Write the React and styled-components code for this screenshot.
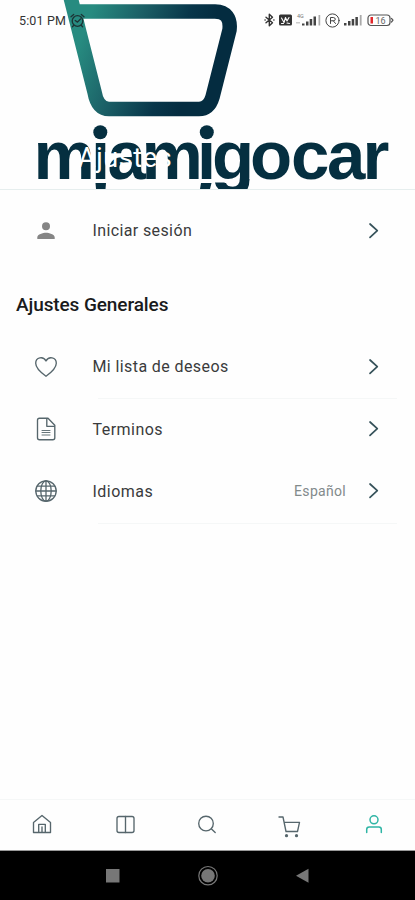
import React from "react";
import styled, { createGlobalStyle } from "styled-components";

const GlobalStyle = createGlobalStyle`
  * { box-sizing: border-box; }
  body { margin: 0; background: #fefefe; font-family: Roboto, sans-serif; }
`;

const Screen = styled.div`
  display: flex;
  flex-direction: column;
  width: 415px;
  height: 900px;
  overflow: hidden;
  background: #fefefe;
`;

const Header = styled.header`
  position: relative;
  display: flex;
  flex-direction: column;
  justify-content: space-between;
  flex: none;
  height: 190px;
  overflow: hidden;
  border-bottom: 1px solid #e6eeee;
`;

const Brand = styled.svg`
  position: absolute;
  inset: 0;
  font-family: "Liberation Sans", sans-serif;
  font-weight: 700;
`;

const StatusBar = styled.div`
  position: relative;
  display: flex;
  align-items: center;
  justify-content: space-between;
  height: 40px;
  padding: 0 21.5px 0 19px;
`;

const StatusGroup = styled.div`
  display: flex;
  align-items: center;
  gap: ${(p) => p.$gap}px;
`;

const Clock = styled.span`
  font-size: 12.5px;
  letter-spacing: 0.15px;
  color: #333;
`;

const Title = styled.h1`
  position: relative;
  margin: 0;
  padding: 0 0 14px 78px;
  font-size: 27px;
  line-height: 34px;
  letter-spacing: 0.6px;
  font-weight: 400;
  color: #fff;
`;

const Content = styled.main`
  display: flex;
  flex-direction: column;
  flex: 1;
`;

const Row = styled.div`
  display: flex;
  align-items: center;
  height: ${(p) => p.$height}px;
  padding: 0 30px 0 34px;
`;

const RowIcon = styled.span`
  display: flex;
  width: 58.5px;
`;

const Label = styled.span`
  flex: 1;
  font-size: 16px;
  letter-spacing: ${(p) => p.$spacing || 0.25}px;
  color: #3a3b3c;
`;

const Value = styled.span`
  margin-right: 15px;
  font-size: 14px;
  letter-spacing: 0.3px;
  color: #828a8b;
`;

const Divider = styled.div`
  height: 1px;
  margin: 0 18px 0 98px;
  background: #f5f7f7;
`;

const SectionTitle = styled.h2`
  margin: 0;
  padding: 22px 16px 18px;
  font-size: 19px;
  line-height: 24px;
  letter-spacing: -0.1px;
  font-weight: 500;
  color: #1a1b1c;
`;

const TabBar = styled.nav`
  display: flex;
  justify-content: space-between;
  flex: none;
  height: 52px;
  padding: 13px 29px 0 30px;
  border-top: 1px solid #f5f7f7;
  border-bottom: 1px solid #999;
`;

const SystemBar = styled.footer`
  display: flex;
  align-items: center;
  flex: none;
  gap: 73px;
  height: 49px;
  padding-left: 102px;
  background: #000;
`;

const LineIcon = styled.svg`
  display: block;
  flex: none;
  fill: none;
  stroke: ${(p) => p.$color || "#56666c"};
  stroke-width: ${(p) => p.$weight || 1.35};
  stroke-linecap: round;
  stroke-linejoin: round;
`;

function Icon({ w = 24, h = 24, color, weight, children }) {
  return (
    <LineIcon width={w} height={h} viewBox={`0 0 ${w} ${h}`} $color={color} $weight={weight}>
      {children}
    </LineIcon>
  );
}

const Chevron = () => (
  <Icon color="#36525a" weight={1.7}>
    <path d="M9 5 16.300 11.700 9 18.400" />
  </Icon>
);

const Signal = () => (
  <Icon w={19} h={12} color="none">
    <g fill="#444">
      <rect x="0" y="9" width="2.5" height="2.5" />
      <rect x="4" y="7" width="2.5" height="4.5" />
      <rect x="7.7" y="5" width="2.5" height="6.5" />
      <rect x="11.4" y="3" width="2.5" height="8.5" />
      <rect x="15.8" y="1" width="1.8" height="10.5" fill="#aaa" />
    </g>
  </Icon>
);

function BrandMark() {
  return (
    <Brand width="415" height="189" viewBox="0 0 415 189">
      <defs>
        <linearGradient id="cart" gradientUnits="userSpaceOnUse" x1="80" y1="42" x2="190" y2="84">
          <stop offset="0" stopColor="#278b80" />
          <stop offset="0.4" stopColor="#1b5f66" />
          <stop offset="0.78" stopColor="#08364a" />
          <stop offset="1" stopColor="#042c40" />
        </linearGradient>
      </defs>
      <g fill="none" stroke="url(#cart)" strokeWidth="14.5">
        <path d="M69.2-8 94.5 92Q97.5 109 109 109H199Q209 109 212.5 97L229.5 30Q231.5 12 215 11.5H72" />
      </g>
      <text
        x="33.5 91 107.5 141.5 197 212 250 291 327 362.5"
        y="178.5"
        fontSize="69"
        fill="#052f40"
      >
        miamigocar
      </text>
      <path d="M214 179.5h14v3.5h-14z" fill="#fefefe" />
      <g fill="#052f40">
        <circle cx="100.3" cy="132.3" r="7" />
        <circle cx="206.8" cy="132.3" r="7" />
        <path d="M95.5 183h10.500l-.5 6h-9.500zM201 183h10.500l-1.500 6h-10z" />
        <path d="M215 182.500h9.500q2 4.500 9 4.500q9 0 9-8h7q0 6-2 10h-29q-3-2.500-3.500-6.500z" />
      </g>
    </Brand>
  );
}

export default function App() {
  return (
    <Screen>
      <GlobalStyle />
      <Header>
        <BrandMark />
        <StatusBar>
          <StatusGroup $gap={4}>
            <Clock>5:01 PM</Clock>
            <Icon w={15} h={15} color="#1c3334" weight={1.3}>
              <circle cx="7.5" cy="8" r="5.3" />
              <path d="M5.200 7.500l2.300 1.600L10.500 6M1 3.800 3.700 1.500M14 3.800l-2.700-2.300M3.600 12.500l-1.200 1.300M11.400 12.500l1.200 1.300" />
            </Icon>
          </StatusGroup>
          <StatusGroup $gap={4}>
            <Icon w={11} h={14} color="#333" weight={1.4}>
              <path d="M2 4.200 8.500 9.800 5.300 12.800V1.200L8.500 4.200 2 9.800M1 7h.2M9.800 7h.2" />
            </Icon>
            <Icon w={13} h={12} color="#fff" weight={1.1}>
              <rect x="0" y="0.500" width="13" height="11" rx="1.500" fill="#333" stroke="none" />
              <path d="M2.500 4 5 8.500 6.500 3.500 8 7l2-3.500M2.500 9.500h2M8 9l2.500.5" />
            </Icon>
            <Icon w={25} h={14} color="none">
              <g fill="#444">
                <text x="1" y="5" fontSize="5.500" fill="#777">4G</text>
                <path d="M0 9h4v1.500H0z" fill="#ccc" />
                <rect x="6" y="10.500" width="2.500" height="2" />
                <rect x="10" y="8.500" width="2.500" height="4" />
                <rect x="13.700" y="6" width="2.500" height="6.500" />
                <rect x="17.500" y="3.500" width="2.500" height="9" />
                <rect x="22.500" y="2" width="1.700" height="10.500" fill="#aaa" />
              </g>
            </Icon>
            <Icon w={15} h={15} color="#444" weight={1}>
              <circle cx="7.500" cy="7.500" r="6.600" />
              <path d="M5.500 10.500v-6h2.800q2 .2 2 1.700t-2 1.600H5.500M8.300 7.800l2.200 2.700" />
            </Icon>
            <Signal />
            <Icon w={27} h={13} color="#555" weight={1.2}>
              <rect x="1" y="1" width="22" height="10.500" rx="3" />
              <path d="M24.500 4.500 26 6.200 24.500 8" />
              <rect x="3.500" y="3" width="2.500" height="6.500" fill="#e3262b" stroke="none" />
              <text x="8.500" y="9.700" fontSize="9" fill="#666" stroke="none">16</text>
            </Icon>
          </StatusGroup>
        </StatusBar>
        <Title>Ajustes</Title>
      </Header>

      <Content>
        <Row $height={81}>
          <RowIcon>
            <Icon color="none">
              <path d="M12 11.200a4 4 0 1 0 0-8 4 4 0 0 0 0 8zM3.300 20v-1.700c0-3 5.700-4.500 8.700-4.500s8.700 1.500 8.700 4.500V20z" fill="#858585" />
            </Icon>
          </RowIcon>
          <Label $spacing={0.38}>Iniciar sesión</Label>
          <Chevron />
        </Row>
        <SectionTitle>Ajustes Generales</SectionTitle>
        <Row $height={63}>
          <RowIcon>
            <Icon>
              <path d="M12 21.300C7 17.700 1.700 12.900 1.700 8.300c0-6 7.600-7.600 10.300-2.300 2.700-5.300 10.300-3.700 10.300 2.300 0 4.600-5.300 9.400-10.300 13z" />
            </Icon>
          </RowIcon>
          <Label $spacing={0.4}>Mi lista de deseos</Label>
          <Chevron />
        </Row>
        <Divider />
        <Row $height={60}>
          <RowIcon>
            <Icon>
              <path d="M5.500 1.200H14l6.800 7v12.500q0 2-2 2H5.500q-2 0-2-2V3.200q0-2 2-2zM12.800 1.500V9.300h7.500" />
              <path d="M8 13.500h8M8 15.500h8M8 18h8" strokeWidth="0.9" />
            </Icon>
          </RowIcon>
          <Label $spacing={0.46}>Terminos</Label>
          <Chevron />
        </Row>
        <Row $height={64}>
          <RowIcon>
            <Icon weight={1.3}>
              <circle cx="12" cy="12" r="10.200" />
              <ellipse cx="12" cy="12" rx="5.200" ry="10.200" />
              <path d="M12 1.800v20.400M1.800 12h20.400M3.300 7.200h17.400M3.300 16.800h17.400" />
            </Icon>
          </RowIcon>
          <Label $spacing={0.46}>Idiomas</Label>
          <Value>Español</Value>
          <Chevron />
        </Row>
        <Divider />
      </Content>

      <TabBar>
        <Icon>
          <path d="M3.500 19.500V9.500L12 2.500l8.500 7v10zM8.700 19.500V11.300h6.600v8.200M12 14v5.500" />
        </Icon>
        <Icon>
          <rect x="4" y="3.500" width="17" height="16" rx="2" />
          <path d="M12.500 3.500v16" />
        </Icon>
        <Icon>
          <circle cx="11" cy="10.500" r="7.300" />
          <path d="m16.500 16 3.700 3.500" />
        </Icon>
        <Icon w={26} h={26}>
          <path d="M1 4h4L8 18.500h11.500l2-9.200H6.100" />
          <circle cx="8.500" cy="22.700" r="1.600" fill="#56666c" stroke="none" />
          <circle cx="18.500" cy="22.700" r="1.600" fill="#56666c" stroke="none" />
        </Icon>
        <Icon color="#2fb5a5" weight={1.5}>
          <circle cx="12" cy="6.800" r="4" />
          <path d="M4.700 19.500v-3q0-2.500 2.500-2.500h9.600q2.500 0 2.500 2.500v3" />
        </Icon>
      </TabBar>

      <SystemBar>
        <Icon w={22} h={22} color="none">
          <path d="M4 4h13.500v13.500H4z" fill="#777" />
        </Icon>
        <Icon w={22} h={22} color="#777" weight={1.2}>
          <circle cx="11" cy="10.700" r="9.200" />
          <circle cx="11" cy="10.700" r="6.800" fill="#777" stroke="none" />
        </Icon>
        <Icon w={22} h={22} color="none">
          <path d="M4 10.700 16.500 3.700v14z" fill="#777" />
        </Icon>
      </SystemBar>
    </Screen>
  );
}
